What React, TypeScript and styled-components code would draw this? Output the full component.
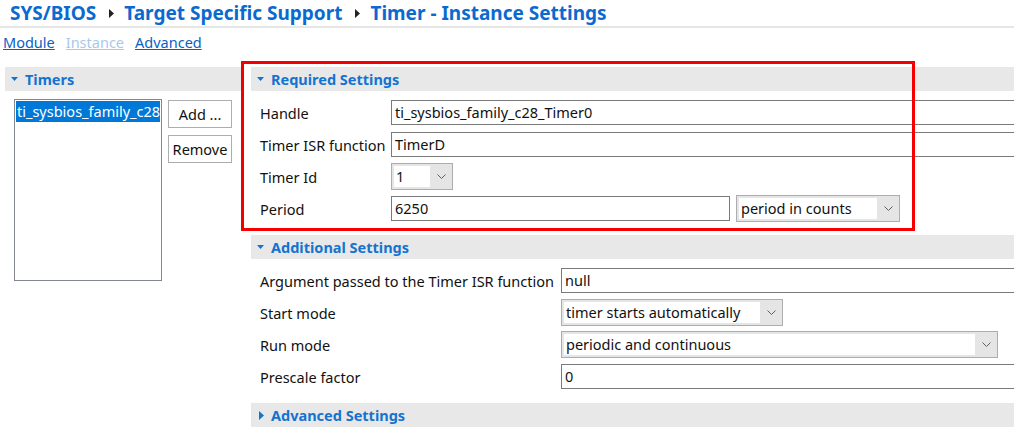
import styled, { createGlobalStyle } from "styled-components"

const GlobalStyle = createGlobalStyle`
html, body {
  margin: 0;
  padding: 0;
  overflow: hidden;
  background: #fff;
}
body {
  font-family: "Noto Sans", "Open Sans", sans-serif;
  color: #111;
}
`

const Page = styled.div`
position: relative;
width: 1030px;
height: 437px;
`

const TitleBar = styled.div`
display: flex;
align-items: center;
height: 26px;
padding-left: 10px;
gap: 6px;
`
const Crumb = styled.span<{ $first?: boolean }>`
font-size: 19px;
font-weight: 700;
color: #0a6ad0;
line-height: 26px;
margin-right: 7px;
margin-left: ${(p) => (p.$first ? 0 : 4)}px;
`
const Rule = styled.div`
height: 2px;
background: #e6e6e6;
`
const Tabs = styled.div`
display: flex;
gap: 11px;
padding-left: 3px;
margin-top: 4px;
height: 20px;
align-items: center;
`
const Tab = styled.a<{ $disabled?: boolean }>`
font-size: 14.5px;
color: ${(p) => (p.$disabled ? "#a9c9ea" : "#0a5fc2")};
text-decoration: underline;
cursor: pointer;
`
const Body = styled.div`
display: flex;
margin-top: 15px;
`
const LeftCol = styled.div`
width: 236px;
margin-left: 5px;
flex-shrink: 0;
`
const RightCol = styled.div`
flex: 1;
margin-left: 10px;
`
const SectionHeader = styled.div`
height: 24px;
background: #e8e8e8;
display: flex;
align-items: center;
gap: 7px;
padding-left: 6px;
font-size: 14.5px;
font-weight: 700;
color: #1473d0;
`
const LeftBody = styled.div`
display: flex;
padding: 8px 0 0 9px;
gap: 6px;
`
const ListBox = styled.div`
width: 144px;
height: 178px;
border: 1px solid #828790;
padding: 1px;
`
const ListItem = styled.div<{ $selected?: boolean }>`
height: 21px;
line-height: 21px;
font-size: 14.5px;
white-space: nowrap;
overflow: hidden;
padding-left: 1px;
background: ${(p) => (p.$selected ? "#0078d7" : "transparent")};
color: ${(p) => (p.$selected ? "#fff" : "#111")};
`
const ButtonCol = styled.div`
display: flex;
flex-direction: column;
gap: 7px;
padding-top: 1px;
`
const Button = styled.button`
width: 64px;
height: 28px;
border: 1px solid #adadad;
background: #fff;
font-family: inherit;
font-size: 14.5px;
color: #111;
padding: 0;
`
const Form = styled.div<{ $labelWidth: number }>`
display: grid;
grid-template-columns: ${(p) => p.$labelWidth}px 1fr;
grid-auto-rows: 27px;
row-gap: 5px;
align-items: center;
padding: 8px 0 13px 9px;
`
const Label = styled.div`
font-size: 14.5px;
white-space: nowrap;
`
const FieldRow = styled.div`
display: flex;
gap: 6px;
align-items: center;
`
const TextInput = styled.div<{ $width?: number }>`
height: 23px;
line-height: 23px;
border: 1px solid #7a7a7a;
padding-left: 3px;
font-size: 14.5px;
background: #fff;
white-space: nowrap;
overflow: hidden;
${(p) => (p.$width ? `width: ${p.$width}px;` : "flex: 1;")}
`
const SelectBox = styled.div<{ $width: number }>`
width: ${(p) => p.$width}px;
height: 25px;
border: 1px solid #adadad;
background: #e5e5e5;
display: flex;
`
const SelectValue = styled.div`
flex: 1;
margin: 2px 0 2px 2px;
background: #fff;
padding-left: 2px;
line-height: 21px;
font-size: 14.5px;
white-space: nowrap;
overflow: hidden;
`
const SelectArrow = styled.div`
width: 22px;
display: flex;
align-items: center;
justify-content: center;
`
const Highlight = styled.div`
position: absolute;
left: 241px;
top: 61px;
width: 668px;
height: 164px;
border: 3px solid #f50000;
pointer-events: none;
`
const TriWrap = styled.span`
display: inline-flex;
margin-left: 2px;
`

const RightTri = ({ color = "#222" }: { color?: string }) => (
  <svg width="5" height="9" viewBox="0 0 5 9">
    <polygon points="0,0 5,4.5 0,9" fill={color} />
  </svg>
)
const DownTri = () => (
  <svg width="7" height="4" viewBox="0 0 7 4">
    <polygon points="0,0 7,0 3.5,4" fill="#1473d0" />
  </svg>
)
const Chevron = () => (
  <svg width="9" height="5" viewBox="0 0 9 5">
    <polyline points="0.5,0.5 4.5,4.5 8.5,0.5" fill="none" stroke="#606060" strokeWidth="1" />
  </svg>
)

const Select = ({ value, width }: { value: string; width: number }) => (
  <SelectBox $width={width}>
    <SelectValue>{value}</SelectValue>
    <SelectArrow>
      <Chevron />
    </SelectArrow>
  </SelectBox>
)

const App = () => {
  return (
    <Page>
      <GlobalStyle />
      <TitleBar>
        <Crumb $first>SYS/BIOS</Crumb>
        <RightTri />
        <Crumb>Target Specific Support</Crumb>
        <RightTri />
        <Crumb>Timer - Instance Settings</Crumb>
      </TitleBar>
      <Rule />
      <Tabs>
        <Tab>Module</Tab>
        <Tab $disabled>Instance</Tab>
        <Tab>Advanced</Tab>
      </Tabs>
      <Body>
        <LeftCol>
          <SectionHeader>
            <DownTri />
            Timers
          </SectionHeader>
          <LeftBody>
            <ListBox>
              <ListItem $selected>ti_sysbios_family_c28_</ListItem>
            </ListBox>
            <ButtonCol>
              <Button>Add ...</Button>
              <Button>Remove</Button>
            </ButtonCol>
          </LeftBody>
        </LeftCol>
        <RightCol>
          <SectionHeader>
            <DownTri />
            Required Settings
          </SectionHeader>
          <Form $labelWidth={131}>
            <Label>Handle</Label>
            <TextInput>ti_sysbios_family_c28_Timer0</TextInput>
            <Label>Timer ISR function</Label>
            <TextInput>TimerD</TextInput>
            <Label>Timer Id</Label>
            <FieldRow>
              <Select value="1" width={60} />
            </FieldRow>
            <Label>Period</Label>
            <FieldRow>
              <TextInput $width={334}>6250</TextInput>
              <Select value="period in counts" width={162} />
            </FieldRow>
          </Form>
          <SectionHeader>
            <DownTri />
            Additional Settings
          </SectionHeader>
          <Form $labelWidth={301}>
            <Label>Argument passed to the Timer ISR function</Label>
            <TextInput>null</TextInput>
            <Label>Start mode</Label>
            <FieldRow>
              <Select value="timer starts automatically" width={220} />
            </FieldRow>
            <Label>Run mode</Label>
            <FieldRow>
              <Select value="periodic and continuous" width={435} />
            </FieldRow>
            <Label>Prescale factor</Label>
            <TextInput>0</TextInput>
          </Form>
          <SectionHeader>
            <TriWrap>
              <RightTri color="#1473d0" />
            </TriWrap>
            Advanced Settings
          </SectionHeader>
        </RightCol>
      </Body>
      <Highlight />
    </Page>
  )
}

export default App
